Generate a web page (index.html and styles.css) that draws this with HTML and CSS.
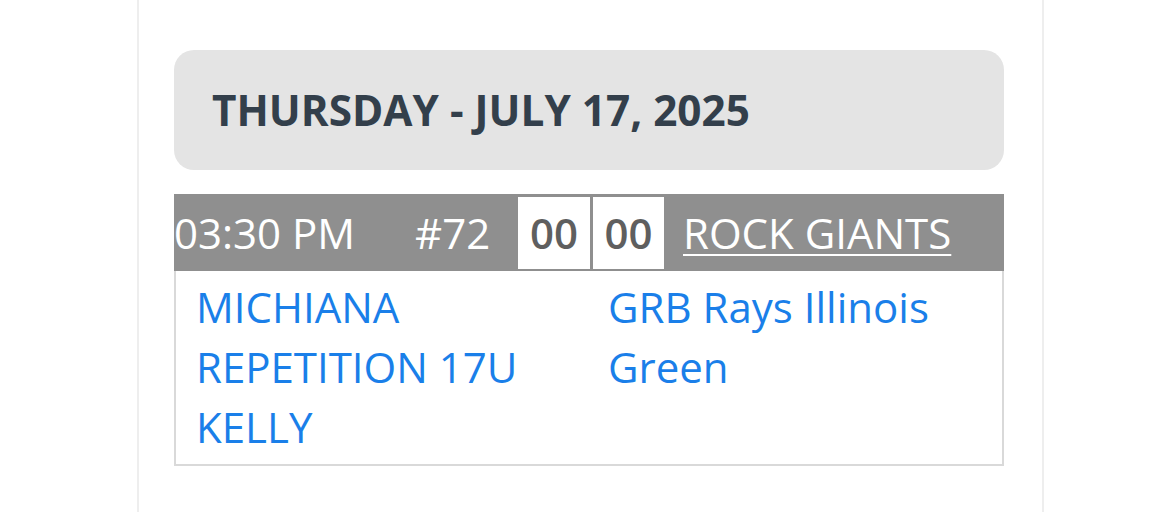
FILE: index.html
```html
<!DOCTYPE html>
<html lang="en">
<head>
<meta charset="utf-8">
<title>Schedule</title>
<link rel="stylesheet" href="styles.css">
</head>
<body>
<div class="page">
  <div class="day-header">THURSDAY - JULY 17, 2025</div>
  <div class="game">
    <div class="game-head">
      <div class="g-time">03:30 PM</div>
      <div class="g-num">#72</div>
      <div class="g-scores">
        <div class="score">00</div>
        <div class="score">00</div>
      </div>
      <a class="g-field" href="#">ROCK GIANTS</a>
    </div>
    <div class="game-body">
      <a class="team" href="#">MICHIANA REPETITION 17U KELLY</a>
      <a class="team" href="#">GRB Rays Illinois Green</a>
    </div>
  </div>
</div>
</body>
</html>
```
FILE: styles.css
```css
html, body {
  margin: 0;
  padding: 0;
  background: #ffffff;
}
body {
  font-family: "Open Sans", "Noto Sans", sans-serif;
  font-size: 42px;
  line-height: 60px;
  color: #333333;
  overflow: hidden;
}
.page {
  margin-left: 137px;
  width: 830px;
  height: 462px;
  box-sizing: content-box;
  border-left: 2px solid #eeeeee;
  border-right: 2px solid #eeeeee;
  padding: 50px 38px 0 35px;
}
.day-header {
  height: 120px;
  box-sizing: border-box;
  background: #e4e4e4;
  border-radius: 20px;
  padding: 0 38px;
  display: flex;
  align-items: center;
  font-weight: 700;
  font-size: 42.3px;
  color: #333f4b;
}
.game {
  margin-top: 24px;
}
.game-head {
  height: 77px;
  background: #8f8f8f;
  display: flex;
  align-items: center;
  color: #ffffff;
}
.g-time {
  width: 241px;
}
.g-num {
  width: 103px;
}
.g-scores {
  display: flex;
  gap: 3px;
  height: 72px;
}
.score {
  width: 72px;
  height: 72px;
  background: #ffffff;
  color: #5f5f5f;
  font-weight: 600;
  display: flex;
  align-items: center;
  justify-content: center;
}
.score + .score {
  width: 71px;
}
.g-field {
  margin-left: 19px;
  color: #ffffff;
  text-decoration: underline;
  text-underline-offset: 5px;
  text-decoration-thickness: 2px;
}
.game-body {
  border: 2px solid #d9d9d9;
  border-top: none;
  display: grid;
  grid-template-columns: 1fr 1fr;
  padding: 6px 0 7px;
}
.team {
  color: #1a7fe9;
  text-decoration: none;
  padding: 0 20px 0 20px;
}
.team + .team {
  padding-left: 19px;
}
```
